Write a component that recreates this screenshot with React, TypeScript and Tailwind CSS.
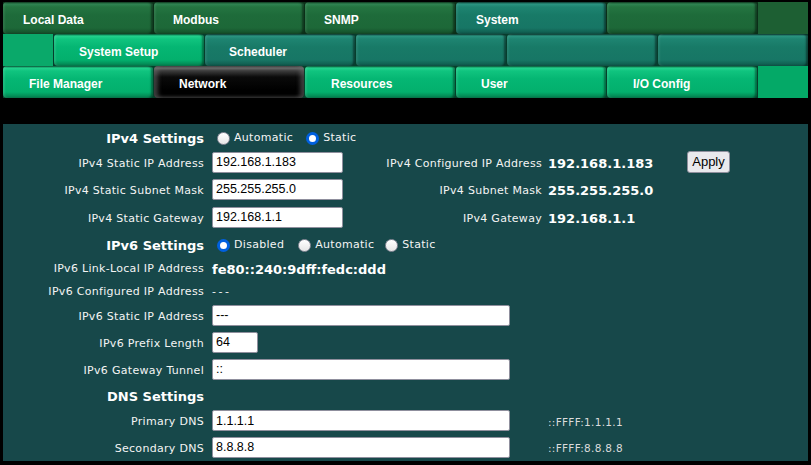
import React from "react";

const tabStyles: Record<string, string> = {
  dark: "bg-[linear-gradient(to_bottom,#0e4021_0px,#2f8452_2px,#247541_5px,#1e6b3a_13px,#1d6838_26px,#134c28_32px)] shadow-[inset_2px_0_2px_rgba(255,255,255,0.07),inset_-2px_0_2px_rgba(0,0,0,0.45)]",
  teal: "bg-[linear-gradient(to_bottom,#0b3d33_0px,#2b9481_2px,#1e8471_5px,#187a67_13px,#177665_26px,#0e574a_32px)] shadow-[inset_2px_0_2px_rgba(255,255,255,0.07),inset_-2px_0_2px_rgba(0,0,0,0.45)]",
  bright: "bg-[linear-gradient(to_bottom,#045c39_0px,#24d28e_2px,#10c47f_5px,#05b673_13px,#03b06d_26px,#037d4d_32px)] shadow-[inset_2px_0_2px_rgba(255,255,255,0.1),inset_-2px_0_2px_rgba(0,0,0,0.4)]",
  black: "bg-[linear-gradient(to_bottom,#1e1e1e_0px,#6b6b6b_2px,#3b3b3b_5px,#0a0a0a_11px,#000000_24px,#000000_32px)] shadow-[inset_4px_0_4px_rgba(110,110,110,0.55),inset_-4px_0_4px_rgba(110,110,110,0.55)]",
};

function Tab({ label, kind, pl }: { label?: string; kind: string; pl: string }) {
  return (
    <div
      className={`w-[150px] shrink-0 h-full rounded-[4px] flex items-center pt-[3px] text-white font-bold text-[12px] font-['Liberation_Sans',Arial,sans-serif] ${pl} ${tabStyles[kind]}`}
    >
      {label}
    </div>
  );
}

function Radio({ checked, label, className = "" }: { checked?: boolean; label: string; className?: string }) {
  return (
    <span className={`flex items-center ${className}`}>
      {checked ? (
        <span className="w-[13px] h-[13px] rounded-full border-[3.5px] border-[#0060df] bg-white" />
      ) : (
        <span className="w-[13px] h-[13px] rounded-full border border-[#8f8f9d] bg-[linear-gradient(to_bottom,#ffffff,#e6e6e6)]" />
      )}
      <span className="ml-[4px]">{label}</span>
    </span>
  );
}

function Field({ value, w }: { value: string; w: string }) {
  return (
    <input
      readOnly
      value={value}
      className={`${w} h-[21px] bg-white border border-[#8f8f9d] rounded-[2px] px-[3px] text-black text-[12.5px] tracking-normal font-['Liberation_Sans',Arial,sans-serif] outline-none`}
    />
  );
}

function Row({
  h,
  label,
  heading,
  textOnly,
  children,
}: {
  h: string;
  label: string;
  heading?: boolean;
  textOnly?: boolean;
  children?: React.ReactNode;
}) {
  return (
    <div className={`flex items-center ${h}`}>
      <div
        className={`w-[205px] shrink-0 text-right pr-[4px] pt-[4px] ${heading ? "font-bold text-[13px] text-white tracking-normal" : "text-[11px]"}`}
      >
        {label}
      </div>
      <div className={`flex items-center pl-[4px] ${textOnly ? "pt-[4px]" : ""}`}>{children}</div>
    </div>
  );
}

const bold = "font-bold text-[13px] text-white tracking-normal";

export default function App() {
  return (
    <div className="w-[811px] h-[465px] bg-black pt-[2px] px-[3px] overflow-hidden">
      {/* tab rows */}
      <div className="flex gap-[1px] h-[32px] bg-[#0b2e18]">
        <Tab label="Local Data" kind="dark" pl="pl-[20px]" />
        <Tab label="Modbus" kind="dark" pl="pl-[19px]" />
        <Tab label="SNMP" kind="dark" pl="pl-[19px]" />
        <Tab label="System" kind="teal" pl="pl-[20px]" />
        <Tab kind="dark" pl="" />
        <div className="flex-1 bg-[#1d5f33]" />
      </div>
      <div className="flex gap-[1px] h-[32px] bg-[#063d2c]">
        <div className="w-[50px] shrink-0 bg-[#0aa96a]" />
        <Tab label="System Setup" kind="bright" pl="pl-[25px]" />
        <Tab label="Scheduler" kind="teal" pl="pl-[24px]" />
        <Tab kind="teal" pl="" />
        <Tab kind="teal" pl="" />
        <Tab kind="teal" pl="" />
      </div>
      <div className="flex gap-[1px] h-[32px] bg-[#05402a]">
        <Tab label="File Manager" kind="bright" pl="pl-[26px]" />
        <Tab label="Network" kind="black" pl="pl-[25px]" />
        <Tab label="Resources" kind="bright" pl="pl-[26px]" />
        <Tab label="User" kind="bright" pl="pl-[25px]" />
        <Tab label="I/O Config" kind="bright" pl="pl-[26px]" />
        <div className="flex-1 bg-[#04a967]" />
      </div>

      {/* settings panel */}
      <div className="mt-[26px] h-[337px] bg-[#17484a] text-[#f4f4f4] text-[11px] tracking-[0.3px] font-['DejaVu_Sans',Verdana,sans-serif]">
        <Row h="h-[25px]" label="IPv4 Settings" heading textOnly>
          <Radio label="Automatic" className="ml-[5px]" />
          <Radio label="Static" checked className="ml-[13px]" />
        </Row>
        <Row h="h-[26px]" label="IPv4 Static IP Address">
          <Field value="192.168.1.183" w="w-[131px]" />
          <div className="w-[199px] text-right pt-[4px]">IPv4 Configured IP Address</div>
          <div className={`w-[145px] pl-[6px] pt-[4px] ${bold}`}>192.168.1.183</div>
          <button className="w-[43px] h-[22px] rounded-[3px] border border-[#8f8f9d] bg-[#e9e9ed] text-black text-[13px] tracking-normal font-['Liberation_Sans',Arial,sans-serif]">
            Apply
          </button>
        </Row>
        <Row h="h-[28px]" label="IPv4 Static Subnet Mask">
          <Field value="255.255.255.0" w="w-[131px]" />
          <div className="w-[199px] text-right pt-[4px]">IPv4 Subnet Mask</div>
          <div className={`pl-[6px] pt-[4px] ${bold}`}>255.255.255.0</div>
        </Row>
        <Row h="h-[28px]" label="IPv4 Static Gateway">
          <Field value="192.168.1.1" w="w-[131px]" />
          <div className="w-[199px] text-right pt-[4px]">IPv4 Gateway</div>
          <div className={`pl-[6px] pt-[4px] ${bold}`}>192.168.1.1</div>
        </Row>
        <Row h="h-[25px]" label="IPv6 Settings" heading textOnly>
          <Radio label="Disabled" checked className="ml-[5px]" />
          <Radio label="Automatic" className="ml-[14px]" />
          <Radio label="Static" className="ml-[11px]" />
        </Row>
        <Row h="h-[23px]" label="IPv6 Link-Local IP Address" textOnly>
          <span className={bold}>fe80::240:9dff:fedc:ddd</span>
        </Row>
        <Row h="h-[23px]" label="IPv6 Configured IP Address" textOnly>
          <span className="tracking-[2.5px]">---</span>
        </Row>
        <Row h="h-[26px]" label="IPv6 Static IP Address">
          <Field value="---" w="w-[298px]" />
        </Row>
        <Row h="h-[28px]" label="IPv6 Prefix Length">
          <Field value="64" w="w-[46px]" />
        </Row>
        <Row h="h-[26px]" label="IPv6 Gateway Tunnel">
          <Field value="::" w="w-[298px]" />
        </Row>
        <Row h="h-[26px]" label="DNS Settings" heading textOnly />
        <Row h="h-[25px]" label="Primary DNS">
          <Field value="1.1.1.1" w="w-[298px]" />
          <span className="ml-[38px] pt-[4px] text-[10.5px] text-[#dcdcdc]">::FFFF:1.1.1.1</span>
        </Row>
        <Row h="h-[28px]" label="Secondary DNS">
          <Field value="8.8.8.8" w="w-[298px]" />
          <span className="ml-[38px] pt-[4px] text-[10.5px] text-[#dcdcdc]">::FFFF:8.8.8.8</span>
        </Row>
      </div>
    </div>
  );
}
